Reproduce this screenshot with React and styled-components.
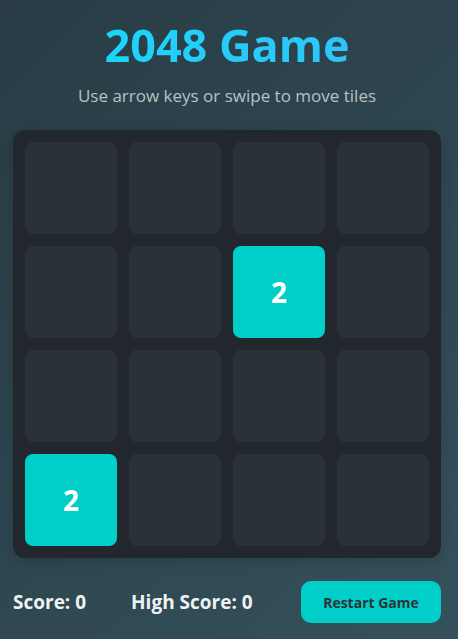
import React, { useState } from "react";
import styled, { createGlobalStyle } from "styled-components";

const GlobalStyle = createGlobalStyle`
  html, body {
    margin: 0;
    padding: 0;
  }
  body {
    font-family: "Open Sans", "Noto Sans", sans-serif;
    background: #2c424b;
  }
  * {
    box-sizing: border-box;
  }
`

const Page = styled.div`
  min-height: 100vh;
  padding: 19px 13px 16px;
  background: linear-gradient(135deg, #293c45 0%, #2e4650 50%, #35515b 100%);
`

const Container = styled.div`
  width: 428px;
  display: flex;
  flex-direction: column;
`

const Title = styled.h1`
  margin: 0;
  text-align: center;
  font-size: 45px;
  font-weight: 700;
  line-height: 52px;
  background: linear-gradient(90deg, #12dcfb 0%, #38bdf8 100%);
  -webkit-background-clip: text;
  background-clip: text;
  color: transparent;
`

const Subtitle = styled.p`
  margin: 14px 0 23px;
  text-align: center;
  font-size: 17px;
  line-height: 22px;
  color: #b6c2c8;
`

const Board = styled.div`
  display: grid;
  grid-template-columns: repeat(4, 92px);
  grid-auto-rows: 92px;
  gap: 12px;
  padding: 12px;
  width: 428px;
  border-radius: 12px;
  background: #22272e;
  box-shadow: 0 4px 14px rgba(0, 0, 0, 0.15);
`

const Cell = styled.div`
  border-radius: 8px;
  background: ${(p) => (p.$value ? "#00cec9" : "#2a3139")};
  color: #ffffff;
  font-size: 28px;
  font-weight: 700;
  display: flex;
  align-items: center;
  justify-content: center;
`

const Footer = styled.div`
  margin-top: 23px;
  display: flex;
  align-items: center;
`

const Stat = styled.span`
  font-size: 19px;
  font-weight: 700;
  color: #eef2f4;
  margin-right: 45px;
`

const RestartButton = styled.button`
  margin-left: auto;
  width: 140px;
  height: 42px;
  border: none;
  border-radius: 10px;
  background: #00cec9;
  color: #2d3436;
  font-family: inherit;
  font-size: 14px;
  font-weight: 700;
  cursor: pointer;
`

const startGrid = [
  0, 0, 0, 0,
  0, 0, 2, 0,
  0, 0, 0, 0,
  2, 0, 0, 0,
]

export default function App() {
  const [grid] = useState(startGrid)
  return (
    <>
      <GlobalStyle />
      <Page>
        <Container>
          <Title>2048 Game</Title>
          <Subtitle>Use arrow keys or swipe to move tiles</Subtitle>
          <Board>
            {grid.map((v, i) => (
              <Cell key={i} $value={v}>{v || ""}</Cell>
            ))}
          </Board>
          <Footer>
            <Stat>Score: 0</Stat>
            <Stat>High Score: 0</Stat>
            <RestartButton>Restart Game</RestartButton>
          </Footer>
        </Container>
      </Page>
    </>
  )
}
